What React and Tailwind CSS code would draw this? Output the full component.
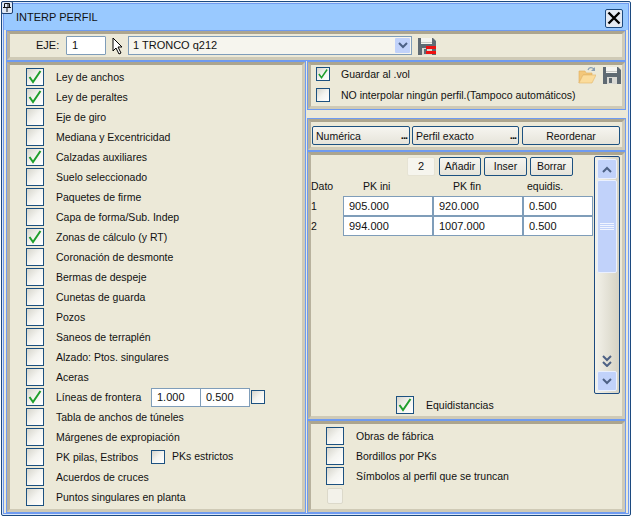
import React from 'react';

const font = { fontFamily: '"Liberation Sans", sans-serif' };

function SaveIcon({ red }) {
  return (
    <svg width="18" height="18" viewBox="0 0 18 18" className="shrink-0">
      <path d="M0 1h15l3 3v14H0z" fill="#5f6a72" />
      <rect x="3" y="1" width="11" height="6" fill="#f4f4f0" />
      <rect x="3" y="5" width="11" height="1" fill="#c8c8c4" />
      <rect x="4" y="11" width="10" height="7" fill="#d9d9d4" />
      <rect x="6" y="12" width="3" height="5" fill="#5f6a72" />
      {red && <rect x="8" y="9" width="10" height="3" fill="#ee1111" />}
      {red && <rect x="8" y="14" width="10" height="3" fill="#ee1111" />}
    </svg>
  );
}

function FolderIcon() {
  return (
    <svg width="18" height="18" viewBox="0 0 18 18" className="shrink-0">
      <path d="M1 5h6l1 2h6v2H5L1 17z" fill="#f3c77a" stroke="#e0b060" strokeWidth="0.6" />
      <path d="M5 9h13l-4 8H1z" fill="#fbdc9c" stroke="#e3b569" strokeWidth="0.6" />
      <path d="M10 4c1-3 4-3 6-1" fill="none" stroke="#8aa0b4" strokeWidth="1.2" />
      <path d="M17 1v4h-4z" fill="#8aa0b4" />
    </svg>
  );
}

function Check({ checked, small, className = '' }) {
  return (
    <div className={`shrink-0 border border-[#1c5180] bg-[linear-gradient(135deg,#d6d5cc_0%,#f4f4f0_50%,#ffffff_100%)] ${small ? 'w-[14px] h-[14px]' : 'w-[18px] h-[18px]'} ${className}`}>
      {checked && (
        <svg width={small ? 12 : 16} height={small ? 12 : 16} viewBox="0 0 16 16">
          <path d="M2.5 8l3.5 5L13.5 2" fill="none" stroke="#1f9e2c" strokeWidth="2" />
        </svg>
      )}
    </div>
  );
}

function Panel({ className = '', children }) {
  return (
    <div className={`border border-[#6f9bf0] ${className}`}>
      <div className="h-full border-[3px] border-t-[#aca58f] border-l-[#b8b29e] border-r-[#d0cbb8] border-b-[#cfcab6] bg-[#ece9d8]">
        {children}
      </div>
    </div>
  );
}

function Field({ className = '', children }) {
  return (
    <div className={`h-[19px] bg-white border border-[#7f9db9] flex items-center px-[5px] text-[11px] text-[#111] ${className}`}>
      {children}
    </div>
  );
}

function Btn({ className = '', dots, children }) {
  return (
    <div className={`relative h-[19px] pt-[2px] rounded-[2px] border border-[#1c5180] bg-[linear-gradient(#f6f5f0,#e6e4da)] flex items-center text-[10.5px] text-[#111] ${className}`}>
      {children}
      {dots && <span className="absolute right-[2px] bottom-[3px] text-[11px] font-bold leading-none tracking-[-1px]">...</span>}
    </div>
  );
}

function Row({ checked, children }) {
  return (
    <div className="h-[20px] flex items-center text-[10.5px] text-[#111]">
      <Check checked={checked} />
      <span className="ml-[12px] mt-[2px] whitespace-nowrap">{children}</span>
    </div>
  );
}

function Chevron({ double }) {
  return (
    <svg width="10" height={double ? 12 : 7} viewBox={double ? '0 0 10 12' : '0 0 10 7'}>
      <path d="M1 1l4 4 4-4" fill="none" stroke="#4d6185" strokeWidth="2" />
      {double && <path d="M1 7l4 4 4-4" fill="none" stroke="#4d6185" strokeWidth="2" />}
    </svg>
  );
}

export default function App() {
  const topRows = [
    ['Ley de anchos', true],
    ['Ley de peraltes', true],
    ['Eje de giro'],
    ['Mediana y Excentricidad'],
    ['Calzadas auxiliares', true],
    ['Suelo seleccionado'],
    ['Paquetes de firme'],
    ['Capa de forma/Sub. Indep'],
    ['Zonas de cálculo (y RT)', true],
    ['Coronación de desmonte'],
    ['Bermas de despeje'],
    ['Cunetas de guarda'],
    ['Pozos'],
    ['Saneos de terraplén'],
    ['Alzado: Ptos. singulares'],
    ['Aceras'],
  ];
  const tableRows = [
    ['1', '905.000', '920.000', '0.500'],
    ['2', '994.000', '1007.000', '0.500'],
  ];

  return (
    <div style={font} className="relative w-[632px] h-[516px] bg-white overflow-hidden">
      {/* pin */}
      <div className="absolute left-[1px] top-[1px] w-[12px] h-[13px] rounded-[2px] border border-[#1c3f70] bg-[#dfe8f5] flex items-center justify-center z-10">
        <svg width="8" height="9" viewBox="0 0 8 9">
          <path d="M1.5 0.5h5v4h-5zM0 4.5h8M4 5v4M5 1v3" fill="none" stroke="#111" strokeWidth="1" />
        </svg>
      </div>

      <div className="h-[515px] w-[630px] ml-[1px] mt-[1px] border border-[#1c4a80] rounded-[2px] bg-[#dbe8fb] p-[1px]">
        <div className="h-full bg-[#ece9d8] border border-[#6f9bf0] flex flex-col px-[2px]">
          {/* title */}
          <div className="h-[26px] -mx-[2px] bg-[#99c9ff] flex items-center justify-between pl-[12px] pr-[5px] shrink-0">
            <span className="text-[11px] text-[#111]">INTERP PERFIL</span>
            <div className="w-[18px] h-[19px] mt-[2px] rounded-[2px] border border-[#1c4a80] bg-[#e4eaf3] flex items-center justify-center">
              <svg width="14" height="14" viewBox="0 0 14 14">
                <path d="M1.5 1.5l11 11M12.5 1.5l-11 11" stroke="#000" strokeWidth="2.4" />
              </svg>
            </div>
          </div>

          {/* eje bar */}
          <Panel className="h-[31px] shrink-0">
            <div className="h-full flex items-center pl-[26px]">
              <span className="text-[11px] text-[#111] w-[30px]">EJE:</span>
              <Field className="w-[40px] rounded-[1px]">1</Field>
              <svg width="12" height="18" viewBox="0 0 12 18" className="ml-[6px] shrink-0">
                <path d="M1 1v13l3-3 3 6 2-1-3-6h4z" fill="#fff" stroke="#000" />
              </svg>
              <div className="ml-[4px] w-[284px] h-[19px] border border-[#7f9db9] bg-[#f6f5ee] flex items-center justify-between pl-[4px] pr-[1px] text-[11px] text-[#111]">
                1 TRONCO q212
                <div className="w-[15px] h-[15px] rounded-[1px] bg-[#c1d2fa] flex items-center justify-center">
                  <Chevron />
                </div>
              </div>
              <div className="ml-[6px]"><SaveIcon red /></div>
            </div>
          </Panel>

          <div className="flex flex-1 min-h-0 gap-[1px]">
            {/* left column */}
            <Panel className="w-[300px] shrink-0">
              <div className="h-full pl-[16px] pt-[2px] flex flex-col">
                {topRows.map(([label, checked]) => (
                  <Row key={label} checked={checked}>{label}</Row>
                ))}
                <div className="h-[20px] flex items-center text-[10.5px] text-[#111]">
                  <Check checked />
                  <span className="ml-[12px] mt-[2px] w-[95px] whitespace-nowrap">Líneas de frontera</span>
                  <Field className="w-[50px]">1.000</Field>
                  <Field className="w-[50px] -ml-[1px]">0.500</Field>
                  <Check small className="ml-[1px]" />
                </div>
                <Row>Tabla de anchos de túneles</Row>
                <Row>Márgenes de expropiación</Row>
                <div className="h-[20px] flex items-center text-[10.5px] text-[#111]">
                  <Check />
                  <span className="ml-[12px] mt-[2px] w-[95px] whitespace-nowrap">PK pilas, Estribos</span>
                  <Check small />
                  <span className="ml-[7px]">PKs estrictos</span>
                </div>
                <Row>Acuerdos de cruces</Row>
                <Row>Puntos singulares en planta</Row>
              </div>
            </Panel>

            {/* right column */}
            <div className="flex-1 min-w-0 flex flex-col">
              <Panel className="h-[49px] shrink-0">
                <div className="h-full pl-[5px] pr-[1px] flex items-start justify-between">
                  <div className="flex flex-col gap-[1px] text-[10.5px] text-[#111] -mt-[1px]">
                    <div className="h-[20px] flex items-center">
                      <Check small checked />
                      <span className="ml-[11px] mt-[2px]">Guardar al .vol</span>
                    </div>
                    <div className="h-[20px] flex items-center whitespace-nowrap">
                      <Check small />
                      <span className="ml-[11px] mt-[2px]">NO interpolar ningún perfil.(Tampoco automáticos)</span>
                    </div>
                  </div>
                  <div className="flex items-center gap-[7px] pt-[1px]">
                    <FolderIcon />
                    <SaveIcon />
                  </div>
                </div>
              </Panel>

              <div className="h-[8px] shrink-0" />

              <Panel className="h-[33px] shrink-0">
                <div className="h-full flex items-center pl-[1px] pt-[2px] gap-[2px]">
                  <Btn dots className="w-[98px] pl-[3px]">Numérica</Btn>
                  <Btn dots className="w-[107px] pl-[3px]">Perfil exacto</Btn>
                  <Btn className="w-[98px] justify-center ml-[1px]">Reordenar</Btn>
                </div>
              </Panel>

              <Panel className="flex-1 min-h-0">
                <div className="h-full flex pl-0 pr-[2px]">
                  <div className="flex-1 min-w-0 flex flex-col">
                    <div className="h-[21px] flex items-center pl-[96px] pt-[1px] gap-[3px] shrink-0">
                      <div className="w-[28px] h-[19px] rounded-[2px] bg-[#f6f5ee] border border-[#e6e3d4] flex items-center justify-center text-[11px] text-[#111]">2</div>
                      <Btn className="w-[42px] justify-center ml-[1px]">Añadir</Btn>
                      <Btn className="w-[43px] justify-center">Inser</Btn>
                      <Btn className="w-[43px] justify-center">Borrar</Btn>
                    </div>
                    <div className="grid grid-cols-[32px_90px_90px_70px] text-[10.5px] text-[#111]">
                      <div className="h-[20px] pt-[2px] flex items-center">Dato</div>
                      <div className="h-[20px] pt-[2px] pl-[20px] flex items-center">PK ini</div>
                      <div className="h-[20px] pt-[2px] pl-[20px] flex items-center">PK fin</div>
                      <div className="h-[20px] pt-[2px] pl-[4px] flex items-center">equidis.</div>
                      {tableRows.map((r) => (
                        <React.Fragment key={r[0]}>
                          <div className="h-[20px] pt-[2px] flex items-center">{r[0]}</div>
                          <Field className="h-[20px]">{r[1]}</Field>
                          <Field className="h-[20px]">{r[2]}</Field>
                          <Field className="h-[20px]">{r[3]}</Field>
                        </React.Fragment>
                      ))}
                    </div>
                    <div className="mt-auto mb-[1px] h-[20px] flex items-center pl-[85px] text-[10.5px] text-[#111]">
                      <Check checked />
                      <span className="ml-[12px] mt-[2px]">Equidistancias</span>
                    </div>
                  </div>

                  {/* scrollbar */}
                  <div className="w-[26px] h-[238px] shrink-0 mt-[1px] rounded-[2px] border border-[#1c4a80] bg-[linear-gradient(90deg,#f3f2ea,#d6d3c4)] p-[2px] flex flex-col gap-[1px]">
                    <div className="h-[20px] rounded-[2px] border border-[#eaf0ff] bg-[#c1d2fa] flex items-center justify-center">
                      <span className="rotate-180 flex"><Chevron /></span>
                    </div>
                    <div className="h-[93px] rounded-[2px] border border-[#eaf0ff] bg-[#c1d2fa] flex flex-col items-center justify-center gap-[1px]">
                      <div className="w-[14px] h-[1px] bg-[#f1f5ff]" />
                      <div className="w-[14px] h-[1px] bg-[#f1f5ff]" />
                      <div className="w-[14px] h-[1px] bg-[#f1f5ff]" />
                      <div className="w-[14px] h-[1px] bg-[#f1f5ff]" />
                    </div>
                    <div className="flex-1 flex items-end justify-center pb-[3px]">
                      <Chevron double />
                    </div>
                    <div className="h-[20px] rounded-[2px] border border-[#eaf0ff] bg-[#c1d2fa] flex items-center justify-center">
                      <Chevron />
                    </div>
                  </div>
                </div>
              </Panel>

              <Panel className="h-[93px] shrink-0">
                <div className="h-full pl-[15px] pt-[2px] flex flex-col">
                  <Row>Obras de fábrica</Row>
                  <Row>Bordillos por PKs</Row>
                  <Row>Símbolos al perfil que se truncan</Row>
                  <div className="h-[20px] flex items-center">
                    <div className="w-[16px] h-[16px] rounded-[2px] ml-[1px] border border-[#dcd9ca] bg-[#f3f2ea]" />
                  </div>
                </div>
              </Panel>
            </div>
          </div>
        </div>
      </div>
    </div>
  );
}
